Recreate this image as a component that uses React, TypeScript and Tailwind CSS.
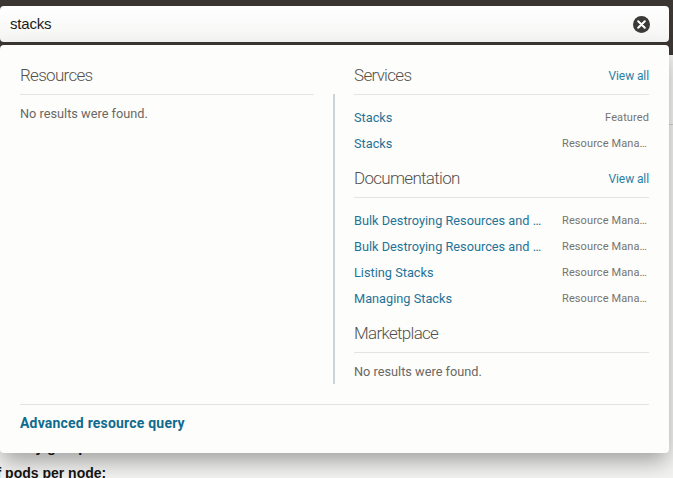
const sans = "font-['Roboto','Liberation_Sans',sans-serif]";

function Heading({ title, viewAll }: { title: string; viewAll?: boolean }) {
  return (
    <div className="flex h-[30px] items-center justify-between border-b border-[#e4e4e2] pb-[8px]">
      <h2 className="text-[17px] font-light tracking-[-0.7px] text-[#55524e]">{title}</h2>
      {viewAll && <a className="text-[12px] tracking-[-0.1px] text-[#2a7fa3]">View all</a>}
    </div>
  );
}

function Empty() {
  return <p className="mt-[10px] text-[12.75px] leading-[18px] text-[#6b6864]">No results were found.</p>;
}

function Row({ name, tag }: { name: string; tag: string }) {
  return (
    <div className="flex h-[26px] items-center justify-between pt-[2px]">
      <a className="w-[194px] truncate text-[12.75px] text-[#1f7398]">{name}</a>
      <span className="w-[87px] truncate text-right text-[11px] tracking-[0.1px] text-[#77746f]">{tag}</span>
    </div>
  );
}

export default function App() {
  return (
    <div className={`relative h-[478px] w-[673px] overflow-hidden bg-[#f3f3f2] ${sans}`}>
      {/* page behind the search overlay */}
      <div className="h-[55px] bg-[#3b3632]" />
      <div className="h-[70px] border-b border-[#cfcfcd] bg-[#f4f4f3]" />
      <div className="flex h-[353px] flex-col justify-end bg-[#f3f3f2] font-['Liberation_Sans',sans-serif] text-[14px] font-bold leading-[16px] text-[#161513]">
        <p className="mb-[10px] pl-[2px]">Policy group:</p>
        <p className="-mb-[3px]">
          <span className="-ml-[12px]">of pods per node:</span>
        </p>
      </div>

      {/* search overlay */}
      <div className="absolute left-0 top-[6px] w-[669px]">
        <div className="flex h-[36px] items-center justify-between rounded-[4px] bg-gradient-to-b from-white to-[#f5f5f4] pl-[10px] pr-[19px]">
          <span className="font-['Liberation_Sans',sans-serif] text-[15px] tracking-[-0.2px] text-[#1b1a18]">stacks</span>
          <span className="flex h-[17px] w-[17px] items-center justify-center rounded-full bg-[#3b3a38]">
            <svg width="9" height="9" viewBox="0 0 9 9" fill="none" stroke="white" strokeWidth="2" strokeLinecap="round">
              <path d="M1.2 1.2 7.8 7.8M7.8 1.2 1.2 7.8" />
            </svg>
          </span>
        </div>
        <div className="mt-[3px] flex h-[408px] flex-col rounded-[4px] bg-[#fdfdfb] px-[20px] pt-[20px] shadow-[0_10px_22px_-2px_rgba(0,0,0,0.35)]">
          <div className="flex h-[319px]">
            <section className="w-[294px]">
              <Heading title="Resources" />
              <Empty />
            </section>
            <div className="ml-[19px] mt-[29px] h-[290px] w-[2px] bg-[#cfd3dc]" />
            <section className="ml-[19px] w-[295px]">
              <Heading title="Services" viewAll />
              <div className="pb-[12px] pt-[9px]">
                <Row name="Stacks" tag="Featured" />
                <Row name="Stacks" tag="Resource Manager" />
              </div>
              <Heading title="Documentation" viewAll />
              <div className="pb-[12px] pt-[9px]">
                <Row name="Bulk Destroying Resources and Stacks" tag="Resource Manager" />
                <Row name="Bulk Destroying Resources and Stacks" tag="Resource Manager" />
                <Row name="Listing Stacks" tag="Resource Manager" />
                <Row name="Managing Stacks" tag="Resource Manager" />
              </div>
              <Heading title="Marketplace" />
              <Empty />
            </section>
          </div>
          <div className="mt-[20px] border-t border-[#e4e4e2] pt-[9px]">
            <a className="block text-[14px] font-bold leading-[18px] tracking-[0.2px] text-[#0f6b8f]">Advanced resource query</a>
          </div>
        </div>
      </div>
    </div>
  );
}
